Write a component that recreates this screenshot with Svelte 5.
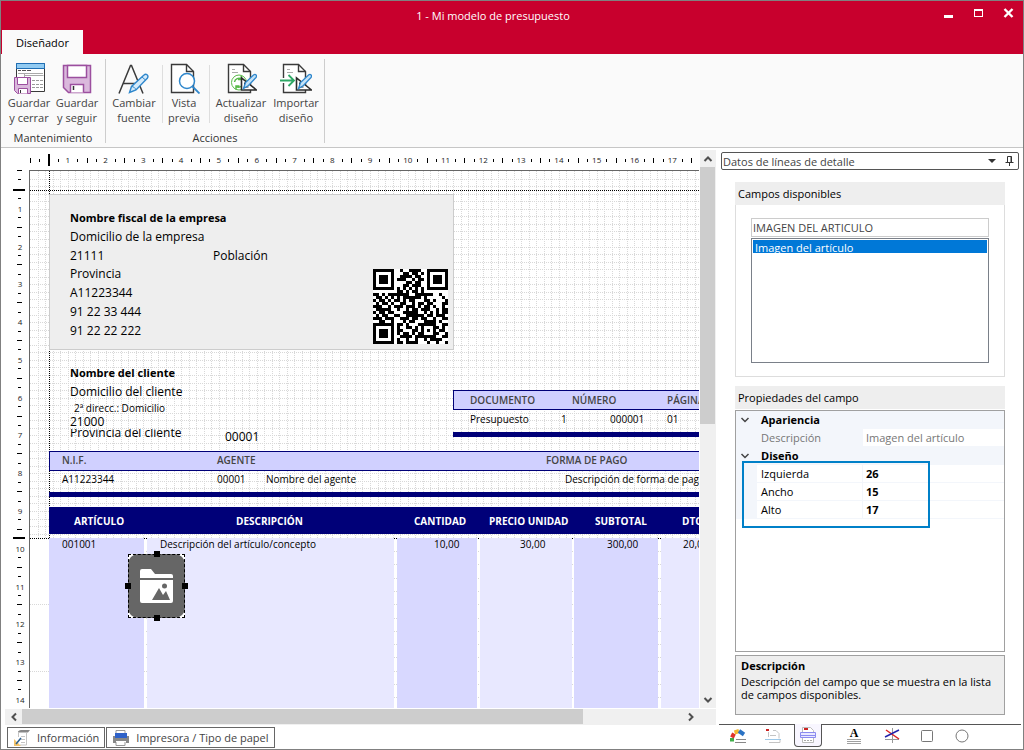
<script lang="ts">
	type Field = {
		x: number;
		y: number;
		text: string;
		kind?: string;
	};

	const CM = 37.78;
	const GRID = CM / 5;

	let section = $state('Datos de líneas de detalle');
	let search = $state('IMAGEN DEL ARTICULO');
	let selectedField = $state('Imagen del artículo');
	let activeTool = $state('lines');

	let rulerWidth = $state(0);
	let rulerHeight = $state(0);

	// Centímetros cuyo número cabe entero en la regla
	function cmLabels(length: number) {
		const count = Math.max(0, Math.floor((length - 7) / CM));
		return Array.from({ length: count }, (_, i) => i + 1);
	}

	const hLabels = $derived(cmLabels(rulerWidth - 29));
	const vLabels = $derived(cmLabels(rulerHeight));

	const quarters = Array.from({ length: 200 }, (_, i) => i);
	const gridSteps = Array.from({ length: 250 }, (_, i) => Math.round((i + 1) * GRID));
	const upperRows = Array.from({ length: 48 }, (_, i) => Math.round((i + 1) * GRID));
	const lowerRows = Array.from({ length: 60 }, (_, i) => Math.round(380 + i * 13.3));

	// Campos del documento, en píxeles desde la esquina de la hoja
	const fields: Field[] = [
		{ x: 40, y: 47, text: 'Nombre fiscal de la empresa', kind: 'title' },
		{ x: 40, y: 66, text: 'Domicilio de la empresa' },
		{ x: 40, y: 85, text: '21111' },
		{ x: 183, y: 85, text: 'Población' },
		{ x: 40, y: 103, text: 'Provincia' },
		{ x: 40, y: 122, text: 'A11223344' },
		{ x: 40, y: 141, text: '91 22 33 444' },
		{ x: 40, y: 160, text: '91 22 22 222' },
		{ x: 40, y: 202, text: 'Nombre del cliente', kind: 'title' },
		{ x: 40, y: 221, text: 'Domicilio del cliente' },
		{ x: 44, y: 238, text: '2ª direcc.: Domicilio', kind: 'small' },
		{ x: 40, y: 262, text: 'Provincia del cliente', kind: 'cut' },
		{ x: 40, y: 251, text: '21000' },
		{ x: 195, y: 266, text: '00001' },
		{ x: 440, y: 230, text: 'DOCUMENTO', kind: 'head' },
		{ x: 542, y: 230, text: 'NÚMERO', kind: 'head' },
		{ x: 637, y: 230, text: 'PÁGINA', kind: 'head' },
		{ x: 440, y: 249, text: 'Presupuesto', kind: 'small' },
		{ x: 531, y: 249, text: '1', kind: 'small' },
		{ x: 580, y: 249, text: '000001', kind: 'small' },
		{ x: 637, y: 249, text: '01', kind: 'small' },
		{ x: 32, y: 290, text: 'N.I.F.', kind: 'head' },
		{ x: 187, y: 290, text: 'AGENTE', kind: 'head' },
		{ x: 516, y: 290, text: 'FORMA DE PAGO', kind: 'head' },
		{ x: 32, y: 309, text: 'A11223344', kind: 'small' },
		{ x: 187, y: 309, text: '00001', kind: 'small' },
		{ x: 236, y: 309, text: 'Nombre del agente', kind: 'small' },
		{ x: 535, y: 309, text: 'Descripción de forma de pago', kind: 'small' },
		{ x: 44, y: 351, text: 'ARTÍCULO', kind: 'inverse' },
		{ x: 206, y: 351, text: 'DESCRIPCIÓN', kind: 'inverse' },
		{ x: 384, y: 351, text: 'CANTIDAD', kind: 'inverse' },
		{ x: 459, y: 351, text: 'PRECIO UNIDAD', kind: 'inverse' },
		{ x: 565, y: 351, text: 'SUBTOTAL', kind: 'inverse' },
		{ x: 652, y: 351, text: 'DTO.', kind: 'inverse' },
		{ x: 32, y: 374, text: '001001', kind: 'small' },
		{ x: 130, y: 374, text: 'Descripción del artículo/concepto', kind: 'small' },
		{ x: 404, y: 374, text: '10,00', kind: 'small' },
		{ x: 490, y: 374, text: '30,00', kind: 'small' },
		{ x: 577, y: 374, text: '300,00', kind: 'small' },
		{ x: 653, y: 374, text: '20,00', kind: 'small' }
	];

	const columns = [
		{ x: 19, w: 95, dark: true },
		{ x: 117, w: 247, dark: false },
		{ x: 367, w: 80, dark: true },
		{ x: 450, w: 92, dark: false },
		{ x: 544, w: 84, dark: true },
		{ x: 631, w: 90, dark: false }
	];

	const qr = [
		'1111111001001111001111111',
		'1000001000110110101000001',
		'1011101001111011001011101',
		'1011101011100101101011101',
		'1011101000011011001011101',
		'1000001000110111001000001',
		'1111111010101010101111111',
		'0000000011010110100000000',
		'1101011111110011111100100',
		'0110101010111111010000010',
		'1011010110101100011010001',
		'0101101001100101101100011',
		'1110010111011101011010010',
		'0111110010010110111001011',
		'1011011000111110010101011',
		'0101100110011111101101110',
		'1110111001110110110010011',
		'0011001000101100011110100',
		'0000000011010001111110011',
		'1111111010011010100011010',
		'1000001011000110101010110',
		'1011101010110101100011001',
		'1011101001111011111110011',
		'1011101010010010010111100',
		'1111111011011110001001001'
	];

	const layout = [
		{ name: 'Izquierda', value: 26 },
		{ name: 'Ancho', value: 15 },
		{ name: 'Alto', value: 17 }
	];
</script>

{#snippet page()}
	<path d="M3.5 2.5h15l7 7v21h-22z" fill="#fff" stroke="#3a3a3a" stroke-width="1.4" />
	<path d="M18.5 2.5v7h7" fill="none" stroke="#3a3a3a" stroke-width="1.4" />
{/snippet}

{#snippet rulerPen()}
	<path d="M16.5 16v12h15z" fill="#fff" stroke="#2b2b2b" stroke-width="1.6" />
	<path d="M19.5 20.5v4.500h4" fill="none" stroke="#2b2b2b" />
	<path d="M18.500 26.500l2-6 8-7.500c2-1.500 4 .5 2.500 2.500l-7.500 8z" fill="#c4e2f7" stroke="#2f87cc" stroke-width="1.3" />
{/snippet}

<div class="window">
	<header class="titlebar">
		<h1>1 - Mi modelo de presupuesto</h1>
		<div class="controls">
			<button aria-label="Minimizar"><svg viewBox="-1 -1 12 12"><path d="M1 7h9v3H1z" fill="#fff" /></svg></button>
			<button aria-label="Maximizar"><svg viewBox="-1 -1 12 12"><path d="M1 1h9v8H1zM2 3v5h7V3z" fill="#fff" fill-rule="evenodd" /></svg></button>
			<button aria-label="Cerrar"><svg viewBox="-1 -1 12 12"><path d="M1.500 1l8 8M9.500 1l-8 8" stroke="#fff" stroke-width="2.4" /></svg></button>
		</div>
		<button class="ribbon-tab">Diseñador</button>
	</header>

	<div class="ribbon">
		<section class="group">
			<div class="tools">
				<button class="tool">
					<svg viewBox="0 0 32 32">
						<path d="M3.500 1.500h28v28h-28z" fill="#fff" stroke="#3a3a3a" />
						<path d="M3.500 1.500h28v5h-28z" fill="#92cbf2" stroke="#1f6fb5" />
						<path d="M5 8.500h3m1 0h4m1 0h4" stroke="#555" />
						<path d="M5 11.500h25M11.500 11.500v4M11.500 13.500h19" stroke="#aaa" />
						<path d="M19 18.500h11M19 22.500h11M19 25.500h11" stroke="#999" stroke-dasharray="3 1" />
						<path d="M1.500 15.500h16v16h-13l-3-3z" fill="#dab8dc" stroke="#9c4f9f" />
						<path d="M4.500 15.500h10v7h-10zM5.500 31.500v-5h9v5" fill="#fff" stroke="#9c4f9f" />
						<path d="M7.500 28v3" stroke="#333" />
					</svg>
					<span>Guardar<br />y cerrar</span>
				</button>
				<button class="tool">
					<svg viewBox="0 0 32 32">
						<path d="M2.500 3.500h27v27h-22l-5-5z" fill="#dab8dc" stroke="#9c4f9f" stroke-width="1.5" />
						<path d="M6.500 3.500h19v12h-19zM9.500 30.500v-8h13v8" fill="#fff" stroke="#9c4f9f" stroke-width="1.5" />
						<path d="M12.500 24v4" stroke="#333" stroke-width="1.5" />
					</svg>
					<span>Guardar<br />y seguir</span>
				</button>
			</div>
			<h2>Mantenimiento</h2>
		</section>
		<section class="group">
			<div class="tools">
				<button class="tool">
					<svg viewBox="0 0 32 32">
						<path d="M1 31.500L12.500 3.500h1L25 31.500M5.500 21.500h15" fill="none" stroke="#3a3a3a" stroke-width="1.5" />
						<path d="M11.500 30.500l2-6L26 13c2-2 5 .5 3.500 3L18 28z" fill="#d4eafa" stroke="#2f87cc" stroke-width="1.4" />
						<path d="M13.500 24.500c2 0 4 1.500 4.500 3.500M24 15l3.500 3" fill="none" stroke="#2f87cc" />
					</svg>
					<span>Cambiar<br />fuente</span>
				</button>
				<i class="split"></i>
				<button class="tool narrow">
					<svg viewBox="0 0 32 32">
						{@render page()}
						<circle cx="19" cy="19" r="7.5" fill="#fff" stroke="#2f87cc" stroke-width="1.5" />
						<path d="M24.500 24.500l7 7" stroke="#2f87cc" stroke-width="1.8" />
					</svg>
					<span>Vista<br />previa</span>
				</button>
				<i class="split"></i>
				<button class="tool wide">
					<svg viewBox="0 0 32 32">
						{@render page()}
						<path d="M7 7.500h3M7 10.500h6" stroke="#aaa" />
						<circle cx="14" cy="20.5" r="7.5" fill="#fff" stroke="#57b947" />
						<path d="M9.500 20a4.500 4.500 0 0 1 7-3M16.500 14v3.500H13M18 21.500a4.500 4.500 0 0 1-7 3M11 27.500V24h3.500" fill="none" stroke="#57b947" stroke-width="1.5" />
						{@render rulerPen()}
					</svg>
					<span>Actualizar<br />diseño</span>
				</button>
				<button class="tool">
					<svg viewBox="0 0 32 32">
						{@render page()}
						<path d="M7 7.500h3M7 10.500h6" stroke="#aaa" />
						<path d="M0 18.500h13" stroke="#fff" stroke-width="5" />
						<path d="M0 18.500h13M8.500 13l5.500 5.500L8.500 24" fill="none" stroke="#2fa866" stroke-width="1.8" />
						{@render rulerPen()}
					</svg>
					<span>Importar<br />diseño</span>
				</button>
			</div>
			<h2>Acciones</h2>
		</section>
	</div>

	<main>
		<div class="editor">
			<div class="design">
				<div class="h-ruler" bind:clientWidth={rulerWidth}>
					<svg width="100%" height="22">
						{#each quarters as q}
							{#if q === 2}
								<rect x="47" y="6" width="2" height="12" />
							{:else if q % 4 === 2 || q === 0}
								<rect x={Math.round(29 + (q * CM) / 4)} y="10" width="1" height="5" />
							{:else if q % 2 === 1}
								<rect x={Math.round(29 + (q * CM) / 4)} y="11" width="1" height="3" />
							{/if}
						{/each}
						{#each hLabels as n}
							<text x={29 + n * CM} y="15">{n}</text>
						{/each}
					</svg>
				</div>
				<div class="v-ruler" bind:clientHeight={rulerHeight}>
					<svg width="28" height="100%">
						{#each quarters as q}
							{#if q === 2}
								<rect x="12" y="19" width="12" height="2" />
							{:else if q === 39}
								<rect x="12" y="367" width="12" height="2" />
							{:else if q % 4 === 2 || q === 0}
								<rect x="16" y={Math.round((q * CM) / 4)} width="5" height="1" />
							{:else if q % 2 === 1}
								<rect x="17" y={Math.round((q * CM) / 4)} width="3" height="1" />
							{/if}
						{/each}
						{#each vLabels as n}
							<text x="19" y={n * CM + 4}>{n}</text>
						{/each}
					</svg>
				</div>

				<div class="sheet">
					<svg class="grid" width="100%" height="100%" shape-rendering="crispEdges">
						{#each gridSteps as x}
							<path d="M{x + 0.5} 0V367" />
						{/each}
						{#each upperRows as y}
							<path d="M0 {y + 0.5}H2000" />
						{/each}
						{#each lowerRows as y, i}
							<path d={i % 5 === 4 ? `M0 ${y + 0.5}H2000` : `M115.5 ${y + 0.5}H2000`} />
						{/each}
						<path class="margin" d="M19.500 0V367M0 19.500H2000M0 367.500H2000" />
					</svg>

					<div class="box company"></div>
					<div class="box band doc"></div>
					<div class="box bar doc"></div>
					<div class="box band agent"></div>
					<div class="box bar agent"></div>
					<div class="box table-head"></div>
					{#each columns as c}
						<div class="column" class:dark={c.dark} style="left: {c.x}px; width: {c.w}px"></div>
					{/each}

					{#each fields as f}
						<span class="field {f.kind ?? ''}" style="left: {f.x}px; top: {f.y - 8}px">{f.text}</span>
					{/each}

					<svg class="qr" viewBox="0 0 25 25" shape-rendering="crispEdges" role="img" aria-label="QR">
						{#each qr as row, y}
							{#each row as cell, x}
								{#if cell === '1' && !(x < 7 && y > 17)}
									<rect {x} {y} width="1" height="1" />
								{/if}
							{/each}
						{/each}
						<path d="M0 18h7v7H0zM1 19v5h5v-5z" fill-rule="evenodd" />
						<path d="M2 20h3v3H2z" />
					</svg>

					<div class="picture">
						<svg viewBox="0 0 57 64">
							<rect width="57" height="64" rx="10" fill="#666" />
							<path d="M12 17q0-2 2-2h9l4 5h16q2 0 2 2v2H12zM12 26h33v21q0 2-2 2H14q-2 0-2-2z" fill="#fff" />
							<path d="M24 46l7-12 4 7 3-4 4 9z" fill="#666" />
							<circle cx="36.5" cy="32" r="2.5" fill="#666" />
						</svg>
						<i class="handle n"></i>
						<i class="handle e"></i>
						<i class="handle s"></i>
						<i class="handle w"></i>
					</div>
				</div>

				<div class="v-scroll">
					<button aria-label="Subir"><svg viewBox="0 0 10 10"><path d="M1.500 7L5 3.500 8.500 7" /></svg></button>
					<div class="track"><div class="thumb"></div></div>
					<button aria-label="Bajar"><svg viewBox="0 0 10 10"><path d="M1.500 3L5 6.500 8.500 3" /></svg></button>
				</div>
				<div class="h-scroll">
					<button aria-label="Izquierda"><svg viewBox="0 0 10 10"><path d="M7 1.500L3.500 5 7 8.500" /></svg></button>
					<div class="track"><div class="thumb"></div></div>
					<button aria-label="Derecha"><svg viewBox="0 0 10 10"><path d="M3 1.500L6.500 5 3 8.500" /></svg></button>
				</div>
			</div>

			<nav class="bottom-tabs">
				<button>
					<svg viewBox="0 0 18 18">
						<path d="M5 2.500q1-1.500 3-1.500h9l-2 2.500H5z" fill="#888" />
						<path d="M5.500 3v5M13.500 4v12H7M8 7.500h4M8 10.500h4M8 13.500h4" fill="none" stroke="#c4c4c4" />
						<path d="M1 10v7h7z" fill="#f3c46b" />
						<path d="M3 15l5-6" stroke="#2b5f8f" stroke-width="1.5" />
					</svg>
					Información
				</button>
				<button>
					<svg viewBox="0 0 18 18">
						<path d="M4 5V1.500h9V5M4 13v3.500h9V13" fill="#fff" stroke="#999" />
						<path d="M1 7h16v7h-3v-2H4v2H1z" fill="#888" />
						<path d="M3 4h12v5H3z" fill="#2f62c9" />
					</svg>
					Impresora / Tipo de papel
				</button>
			</nav>
		</div>

		<aside>
			<div class="combo">
				<select bind:value={section} aria-label="Sección">
					<option>Datos de líneas de detalle</option>
				</select>
				<svg class="arrow" viewBox="0 0 8 4"><path d="M0 0h8L4 4z" fill="#333" /></svg>
				<button aria-label="Anclar">
					<svg viewBox="0 0 10 10"><path d="M2.500 6V.5h4V6M0.500 6.500h8M4.500 7v3M6 .5V6" fill="none" stroke="#333" /></svg>
				</button>
			</div>

			<section class="available">
				<h3>Campos disponibles</h3>
				<div class="available-body">
					<input type="text" bind:value={search} aria-label="Buscar campo" />
					<select size="7" bind:value={selectedField} aria-label="Campos">
						<option>Imagen del artículo</option>
					</select>
				</div>
			</section>

			<section class="properties">
				<h3>Propiedades del campo</h3>
				<div class="prop-grid">
					<table>
						<colgroup>
							<col class="gutter" />
							<col class="name" />
							<col />
						</colgroup>
						<tbody>
							<tr class="category">
								<td><svg viewBox="0 0 10 10"><path d="M1.500 3L5 6.500 8.500 3" /></svg></td>
								<th colspan="2">Apariencia</th>
							</tr>
							<tr class="disabled">
								<td></td>
								<th>Descripción</th>
								<td>{selectedField}</td>
							</tr>
							<tr class="category">
								<td><svg viewBox="0 0 10 10"><path d="M1.500 3L5 6.500 8.500 3" /></svg></td>
								<th colspan="2">Diseño</th>
							</tr>
							{#each layout as p}
								<tr>
									<td></td>
									<th>{p.name}</th>
									<td><b>{p.value}</b></td>
								</tr>
							{/each}
						</tbody>
					</table>
					<div class="highlight"></div>
				</div>
				<div class="help">
					<b>Descripción</b>
					<p>Descripción del campo que se muestra en la lista de campos disponibles.</p>
				</div>
			</section>

			<nav class="side-tabs">
				<button aria-label="Documento" class:active={activeTool === 'doc'} onclick={() => (activeTool = 'doc')}>
					<svg viewBox="0 0 18 18">
						<path d="M3 14.500V11" stroke="#3fae49" stroke-width="4" />
						<path d="M3 10.500L5 6.500" stroke="#e0342b" stroke-width="4" />
						<path d="M5.500 5.500L10 4" stroke="#f3b72e" stroke-width="4" />
						<path d="M10 4l5 3.500" stroke="#2b73c4" stroke-width="4" />
						<path d="M7 12.500h10M6 15.500h11" stroke="#888" />
					</svg>
				</button>
				<button aria-label="Cabecera" class:active={activeTool === 'head'} onclick={() => (activeTool = 'head')}>
					<svg viewBox="0 0 18 18">
						<path d="M2 2h3v2H2z" fill="#c22" />
						<path d="M9 3.500h3l3 3v5M4.500 5v5M6 8.500h6M5 15.500h11v-3" fill="none" stroke="#c4c4c4" />
						<path d="M1 12.500h16" stroke="#9cc8e8" />
					</svg>
				</button>
				<button aria-label="Líneas" class:active={activeTool === 'lines'} onclick={() => (activeTool = 'lines')}>
					<svg viewBox="0 0 18 18">
						<path d="M3.500 16.500v-15h8l3 3v12z" fill="#fff" stroke="#bbb" />
						<path d="M5 2h4v2H5z" fill="#c22" />
						<path d="M1.500 6.500h15v5h-15z" fill="#e8e8ff" stroke="#8a8af0" />
						<path d="M2 9.500h14" stroke="#8a8af0" />
						<path d="M5 14.500h8" stroke="#aaa" stroke-dasharray="2 1" />
					</svg>
				</button>
				<button aria-label="Texto" class="text-tool">
					<span>A</span>
					<svg viewBox="0 0 16 5"><path d="M1 .5h14M1 2.500h14M1 4.500h14" stroke="#888" stroke-width=".8" /></svg>
				</button>
				<button aria-label="Línea" class="line-tool">
					<svg viewBox="0 0 18 18">
						<path d="M9.500 1v15M2 12.500h14" stroke="#999" />
						<path d="M3 3l13 9" stroke="#d22" stroke-width="1.5" />
						<path d="M2 10l14-7" stroke="#22a" stroke-width="1.5" />
					</svg>
				</button>
				<button aria-label="Rectángulo"><svg viewBox="0 0 18 18"><rect x="3.5" y="3.5" width="11" height="11" rx="1" fill="#fff" stroke="#777" /></svg></button>
				<button aria-label="Elipse"><svg viewBox="0 0 18 18"><circle cx="9" cy="9" r="6" fill="#fff" stroke="#777" /></svg></button>
			</nav>
		</aside>
	</main>
</div>

<style>
	:global(body) {
		margin: 0;
	}

	.window {
		box-sizing: border-box;
		height: 100vh;
		min-height: 600px;
		display: flex;
		flex-direction: column;
		border: 1px solid #808080;
		background: #fff;
		color: #000;
		font: 11px/15px 'Open Sans', 'Noto Sans', sans-serif;
		overflow: hidden;
	}

	.window :global(*) {
		box-sizing: border-box;
	}

	button {
		margin: 0;
		padding: 0;
		border: none;
		background: none;
		font: inherit;
		color: inherit;
	}

	svg {
		display: block;
	}

	h1,
	h2,
	h3,
	p {
		margin: 0;
		font: inherit;
	}

	/* Barra de título */
	.titlebar {
		display: grid;
		grid-template-columns: 52px 1fr 90px;
		grid-template-rows: 29px 24px;
		background: #c8002d;
		color: #fff;
	}

	.titlebar h1 {
		grid-column: 2;
		text-align: center;
		line-height: 29px;
	}

	.controls {
		display: flex;
	}

	.controls button {
		width: 30px;
		height: 23px;
		display: flex;
		align-items: center;
		justify-content: center;
	}

	.controls svg {
		width: 12px;
		height: 12px;
	}

	.ribbon-tab {
		grid-column: 1 / 3;
		justify-self: start;
		width: 81px;
		margin-left: 1px;
		background: #fafafa;
		color: #000;
	}

	/* Cinta */
	.ribbon {
		display: flex;
		padding: 5px 0 4px;
		background: #fafafa;
		border-bottom: 1px solid #c6c6c6;
	}

	.group {
		padding: 0 4px;
		border-right: 1px solid #cdcdcd;
	}

	.group h2 {
		text-align: center;
		color: #333;
		line-height: 11px;
	}

	.tools {
		display: flex;
		height: 73px;
	}

	.tool {
		width: 48px;
		display: flex;
		flex-direction: column;
		align-items: center;
		padding-top: 3px;
		color: #444;
		text-align: center;
		white-space: nowrap;
	}

	.tool.narrow {
		width: 42px;
	}

	.tool.wide {
		width: 62px;
	}

	.tool svg {
		width: 32px;
		height: 32px;
		margin-bottom: 1px;
	}

	.split {
		width: 1px;
		height: 58px;
		margin: 6px 0 0 4px;
		background: #dedede;
	}

	main {
		flex: 1;
		min-height: 0;
		display: flex;
	}

	.editor {
		flex: 1;
		min-width: 0;
		display: flex;
		flex-direction: column;
	}

	.design {
		flex: 1;
		min-height: 0;
		display: grid;
		grid-template-columns: 28px minmax(0, 1fr) 16px;
		grid-template-rows: 22px minmax(0, 1fr) 17px;
	}

	.h-ruler {
		grid-column: 1 / 3;
		grid-row: 1;
		margin-right: 1px;
		overflow: hidden;
	}

	.v-ruler {
		grid-column: 1;
		grid-row: 2;
		overflow: hidden;
	}

	.h-ruler text,
	.v-ruler text {
		font-size: 8px;
		text-anchor: middle;
		fill: #222;
	}

	.sheet {
		position: relative;
		grid-column: 2;
		grid-row: 2;
		margin-right: 1px;
		border-top: 1px solid #666;
		border-left: 1px solid #666;
		overflow: hidden;
		color: #000;
	}

	.grid {
		position: absolute;
		inset: 0;
	}

	.grid path {
		stroke: #d8d8d8;
		stroke-dasharray: 1 1;
	}

	.grid .margin {
		stroke: #000;
		fill: none;
	}

	.box {
		position: absolute;
		right: -1px;
	}

	.company {
		left: 19px;
		top: 23px;
		right: auto;
		width: 405px;
		height: 156px;
		background: #eee;
		border: 1px solid #ccc;
	}

	.band {
		height: 20px;
		background: #d0d0ff;
		border: 1px solid #000078;
	}

	.bar {
		height: 5px;
		background: #000078;
	}

	.doc {
		left: 423px;
	}

	.agent {
		left: 19px;
	}

	.band.doc {
		top: 219px;
	}

	.bar.doc {
		top: 261px;
	}

	.band.agent {
		top: 280px;
	}

	.bar.agent {
		top: 321px;
	}

	.table-head {
		left: 19px;
		top: 336px;
		height: 27px;
		background: #000078;
	}

	.column {
		position: absolute;
		top: 367px;
		bottom: 0;
		background: #e8e8ff;
	}

	.column.dark {
		background: #d8d8ff;
	}

	.field {
		position: absolute;
		font-size: 12px;
		line-height: 16px;
		white-space: nowrap;
	}

	.field.title {
		font-size: 11px;
		font-weight: 700;
	}

	.field.small {
		font-size: 10px;
		line-height: 14px;
	}

	.field.cut {
		clip-path: inset(4px 0 0 0);
	}

	.field.head {
		font-size: 10px;
		font-weight: 600;
		line-height: 15px;
		color: #444;
	}

	.field.inverse {
		font-size: 10px;
		font-weight: 700;
		line-height: 14px;
		color: #fff;
	}

	.qr {
		position: absolute;
		left: 343px;
		top: 98px;
		width: 75px;
		height: 75px;
		background: #fff;
	}

	.picture {
		position: absolute;
		left: 98px;
		top: 383px;
		width: 57px;
		height: 64px;
		background: #fff;
		outline: 1px dashed #000;
		outline-offset: -1px;
	}

	.handle {
		position: absolute;
		width: 6px;
		height: 6px;
		background: #000;
	}

	.handle.n {
		left: 26px;
		top: -3px;
	}

	.handle.e {
		right: -3px;
		top: 29px;
	}

	.handle.s {
		left: 26px;
		bottom: -3px;
	}

	.handle.w {
		left: -3px;
		top: 29px;
	}

	/* Barras de desplazamiento */
	.v-scroll,
	.h-scroll {
		display: flex;
		background: #f0f0f0;
	}

	.v-scroll {
		grid-column: 3;
		grid-row: 1 / 3;
		flex-direction: column;
		margin-top: 2px;
	}

	.h-scroll {
		grid-column: 1 / 4;
		grid-row: 3;
		margin: 1px 0 0 4px;
		padding-right: 17px;
	}

	.v-scroll button,
	.h-scroll button {
		width: 17px;
		height: 17px;
		display: flex;
		align-items: center;
		justify-content: center;
	}

	.v-scroll button {
		width: 16px;
	}

	.h-scroll button {
		height: 16px;
	}

	.v-scroll svg,
	.h-scroll svg {
		width: 10px;
		height: 10px;
		fill: none;
		stroke: #505050;
		stroke-width: 2;
	}

	.track {
		flex: 1;
	}

	.thumb {
		background: #cdcdcd;
	}

	.v-scroll .thumb {
		width: 15px;
		height: 49%;
	}

	.h-scroll .thumb {
		width: 85%;
		height: 15px;
	}

	.bottom-tabs {
		display: flex;
		gap: 1px;
		padding: 2px 6px 1px;
	}

	.bottom-tabs button {
		display: flex;
		align-items: center;
		gap: 6px;
		height: 21px;
		padding: 0 5px;
		border: 1px solid #666;
		color: #444;
	}

	.bottom-tabs svg {
		width: 18px;
		height: 18px;
	}

	/* Panel lateral */
	aside {
		width: 307px;
		display: flex;
		flex-direction: column;
		padding: 4px 2px 2px 3px;
	}

	.combo {
		display: flex;
		align-items: center;
		height: 18px;
		margin: 0 2px;
		border: 1px solid #555;
		border-radius: 2px;
		color: #444;
	}

	.combo select {
		flex: 1;
		height: 15px;
		appearance: none;
		border: none;
		background: none;
		padding: 0 1px;
		font: inherit;
		color: inherit;
	}

	.combo .arrow {
		width: 8px;
		height: 4px;
		margin-right: 9px;
		pointer-events: none;
	}

	.combo button {
		margin-right: 3px;
	}

	.combo button svg {
		width: 10px;
		height: 10px;
	}

	h3 {
		height: 23px;
		padding-left: 3px;
		line-height: 23px;
		background: #eee;
	}

	.available {
		margin: 12px 16px 9px;
	}

	.available-body {
		padding: 13px 15px;
		border: 1px solid #ddd;
		border-top: none;
	}

	.available-body input,
	.available-body select {
		display: block;
		width: 100%;
		font: inherit;
		border-radius: 0;
		outline: none;
	}

	.available-body input {
		height: 19px;
		padding: 0 1px;
		border: 1px solid #ccc;
		color: #444;
	}

	.available-body select {
		height: 125px;
		margin-top: 1px;
		padding: 1px;
		border: 1px solid #7a8089;
		background: #fff;
		overflow: hidden;
	}

	.available-body option {
		height: 13px;
		min-height: 13px;
		padding: 0 2px;
		line-height: 13px;
	}

	.available-body option:checked {
		background: #0078d7 linear-gradient(#0078d7, #0078d7);
		color: #fff;
		-webkit-text-fill-color: #fff;
	}

	.properties {
		flex: 1;
		min-height: 0;
		display: flex;
		flex-direction: column;
		margin: 0 16px 9px;
	}

	.properties h3 {
		margin-bottom: 1px;
	}

	.prop-grid {
		position: relative;
		flex: 1;
		border: 1px solid #a0a0a0;
	}

	table {
		width: 100%;
		border-spacing: 0;
		table-layout: fixed;
	}

	.gutter {
		width: 21px;
	}

	.name {
		width: 106px;
	}

	td,
	th {
		height: 18px;
		padding: 0 3px;
		font-weight: 400;
		line-height: 17px;
		text-align: left;
		border-bottom: 1px solid #f3f6fb;
	}

	td:first-child {
		padding: 0 4px;
		background: #f3f6fb;
	}

	th {
		padding-left: 4px;
		border-right: 1px solid #f3f6fb;
	}

	.category th {
		background: #f3f6fb;
		font-weight: 700;
	}

	.disabled {
		color: #777;
	}

	.disabled th {
		background: #f3f6fb;
	}

	td svg {
		width: 10px;
		height: 10px;
		fill: none;
		stroke: #444;
		stroke-width: 1.5;
	}

	.highlight {
		position: absolute;
		left: 6px;
		top: 50px;
		width: 188px;
		height: 67px;
		border: 2px solid #0080c8;
	}

	.help {
		height: 60px;
		margin-top: 3px;
		padding: 2px 5px;
		background: #eee;
		border: 1px solid #a0a0a0;
	}

	.help p {
		margin-top: 2px;
		line-height: 13px;
	}

	.side-tabs {
		display: flex;
		gap: 7px;
		height: 23px;
		padding-left: 5px;
		border-top: 1px solid #555;
	}

	.side-tabs button {
		width: 28px;
		display: flex;
		flex-direction: column;
		align-items: center;
		justify-content: center;
	}

	.side-tabs .active {
		margin-top: -1px;
		background: #f8f6ff;
		border: 1px solid #555;
		border-top: none;
		border-radius: 0 0 4px 4px;
	}

	.side-tabs svg {
		width: 18px;
		height: 18px;
	}

	.side-tabs .text-tool {
		margin-left: 11px;
	}

	.side-tabs .line-tool {
		margin-left: 3px;
	}

	.text-tool span {
		font: 700 12px/11px 'Liberation Serif', serif;
	}

	.side-tabs .text-tool svg {
		width: 16px;
		height: 5px;
	}
</style>
